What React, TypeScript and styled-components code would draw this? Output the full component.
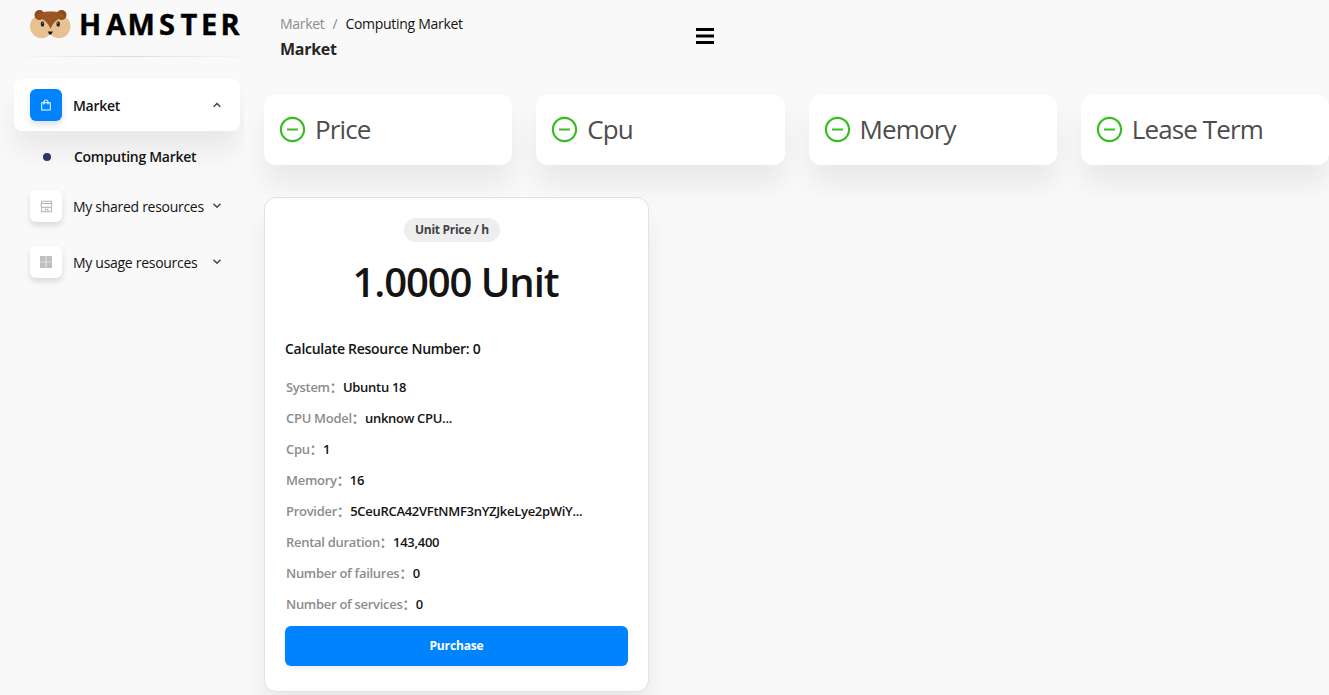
import React from "react";
import styled, { createGlobalStyle } from "styled-components";
import { AiOutlineShopping, AiOutlineShop, AiOutlineMinusCircle } from "react-icons/ai";

const GlobalStyle = createGlobalStyle`
  * { box-sizing: border-box; }
  html, body { margin: 0; overflow: hidden; }
  body {
    background: #f9f9f9;
    font-family: "Open Sans", "Noto Sans CJK SC", sans-serif;
    font-size: 14px;
    letter-spacing: -0.29px;
    color: #141414;
  }
`;

const Layout = styled.div`
  display: flex;
  height: 695px;
  overflow: hidden;
`;

const Sidebar = styled.aside`
  width: 244px;
  flex: none;
  padding: 8px 4px 0 14px;
  overflow: hidden;
`;

const Brand = styled.div`
  display: flex;
  height: 32px;
  padding-left: 15px;

  svg { overflow: visible; }
`;

const Rule = styled.hr`
  height: 1px;
  margin: 16px 0 22px;
  border: 0;
  background: linear-gradient(90deg, rgba(224, 225, 226, 0), #dcdcdc, rgba(224, 225, 226, 0.15));
`;

const MenuItem = styled.div<{ $active?: boolean }>`
  display: flex;
  align-items: center;
  height: ${(p) => (p.$active ? 52 : 56)}px;
  padding: 0 19px 0 16px;
  border-radius: 8px;
  font-weight: ${(p) => (p.$active ? 600 : 400)};
  background: ${(p) => (p.$active ? "#fff" : "transparent")};
  box-shadow: ${(p) => (p.$active ? "0 20px 27px rgba(0, 0, 0, 0.065)" : "none")};
  color: #141414;
`;

const IconTile = styled.span<{ $active?: boolean }>`
  display: flex;
  align-items: center;
  justify-content: center;
  width: 32px;
  height: 32px;
  margin-right: 11px;
  border-radius: 6px;
  color: ${(p) => (p.$active ? "#fff" : "#b5b5b5")};
  background: ${(p) => (p.$active ? "#0083ff" : "#fff")};
  box-shadow: 0 4px 6px rgba(0, 0, 0, 0.12);
`;

const MenuLabel = styled.span`
  flex: 1;
  line-height: 22px;
  padding-top: 2px;
  white-space: nowrap;
`;

const SubItem = styled.div`
  display: flex;
  align-items: center;
  height: 47px;
  padding: 4px 0 0 29px;
  font-weight: 600;
`;

const Dot = styled.span`
  width: 8px;
  height: 8px;
  margin-right: 23px;
  border-radius: 50%;
  background: #2f365f;
`;

const Main = styled.main`
  flex: 1;
  min-width: 0;
  padding: 13px 0 0 20px;
`;

const Header = styled.header`
  display: flex;
  height: 82px;
  padding-left: 16px;
`;

const Titles = styled.div`
  width: 414px;
`;

const Crumbs = styled.div`
  display: flex;
  gap: 8px;
  line-height: 22px;
  color: #8c8c8c;
`;

const CrumbCurrent = styled.span`
  color: #141414;
`;

const Title = styled.h1`
  margin: 2px 0 0;
  font-size: 16px;
  line-height: 24px;
  font-weight: 700;
  color: #262626;
`;

const MenuButton = styled.button`
  display: flex;
  align-items: center;
  width: 24px;
  height: 24px;
  margin-top: 11px;
  padding: 0 2px;
  border: 0;
  background: none;
`;

const Filters = styled.div`
  display: grid;
  grid-template-columns: repeat(4, 1fr);
  gap: 24px;
`;

const FilterCard = styled.div`
  display: flex;
  align-items: center;
  gap: 8px;
  height: 70px;
  padding: 0 0 2px 14px;
  border-radius: 12px;
  background: #fff;
  box-shadow: 0 20px 27px rgba(0, 0, 0, 0.065);
  font-size: 26px;
  letter-spacing: -0.88px;
  color: #4d4d4d;

  svg { color: #37bd22; }
`;

const OfferCard = styled.section`
  display: flex;
  flex-direction: column;
  width: 385px;
  height: 495px;
  margin-top: 32px;
  padding: 20px;
  border: 1px solid #e2e2e2;
  border-radius: 12px;
  background: #fff;
  box-shadow: 0 20px 27px rgba(0, 0, 0, 0.065);
`;

const Tag = styled.span`
  align-self: center;
  height: 24px;
  margin-right: 9px;
  padding: 0 11px;
  border-radius: 12px;
  background: #eee;
  font-size: 12px;
  line-height: 24px;
  font-weight: 700;
  color: #434343;
`;

const Price = styled.div`
  height: 75px;
  margin-top: 10px;
  padding-right: 2px;
  text-align: center;
  font-size: 40px;
  line-height: 60px;
  font-weight: 600;
  letter-spacing: -1.08px;
`;

const ResourceNumber = styled.div`
  height: 45px;
  line-height: 44px;
  font-weight: 600;
`;

const Row = styled.div`
  height: 31px;
  padding-left: 1px;
  font-size: 13px;
  line-height: 31px;
  font-weight: 600;
  white-space: nowrap;
`;

const RowLabel = styled.span`
  margin-right: 0.5px;
  color: #8c8c8c;
`;

const Purchase = styled.button`
  height: 40px;
  margin-top: 6px;
  padding-bottom: 2px;
  border: 0;
  border-radius: 6px;
  background: #0083ff;
  box-shadow: 0 2px 4px rgba(0, 0, 0, 0.07);
  color: #fff;
  font: 700 12px "Open Sans", sans-serif;
  letter-spacing: -0.15px;
`;

const Logo = () => (
  <svg width="212" height="32" viewBox="0 0 212 32">
    <circle cx="12.500" cy="18.500" r="11.500" fill="#e8c193" />
    <circle cx="30" cy="18.500" r="11.500" fill="#e8c193" />
    <path d="M16 12H27V26H16Z" fill="#e8c193" />
    <circle cx="10.500" cy="7" r="5" fill="#8b4a1c" />
    <circle cx="32.500" cy="7" r="5" fill="#8b4a1c" />
    <path d="M6 10C9 4.500 14 3.500 21.500 3.500C29 3.500 34 4.500 37 10C30 9 25 13 21.500 21C18 13 13 9 6 10Z" fill="#9c5523" />
    <ellipse cx="13.500" cy="16" rx="1.800" ry="2.800" fill="#242321" />
    <ellipse cx="29.200" cy="16" rx="1.800" ry="2.800" fill="#242321" />
    <circle cx="13.900" cy="15" r=".6" fill="#ddd" />
    <circle cx="28.800" cy="15" r=".6" fill="#ddd" />
    <path d="M18.800 23.500H23.800L22.300 26.500H20.300Z" fill="#171512" />
    <text
      x="50 77 98.500 130 151.500 172 191.500"
      y="26.800"
      fontFamily="Open Sans"
      fontWeight="700"
      fontSize="29"
      fill="#000"
      stroke="#000"
      strokeWidth=".4"
    >
      HAMSTER
    </text>
  </svg>
);

const Chevron = ({ up }: { up?: boolean }) => (
  <svg width="8" height="6" viewBox="0 0 8 6" fill="none" stroke="#434343" strokeWidth="1.5">
    <path d={up ? "M.7 4.800L4 1.500L7.300 4.800" : "M.5 .8L4 4.300L7.500 .8"} />
  </svg>
);

const Grid = () => (
  <svg width="12" height="12" viewBox="0 0 12 12" fill="#bfbfbf">
    <path d="M0 0H5.700V5.700H0ZM6.300 0H12V5.700H6.300ZM0 6.300H5.700V12H0ZM6.300 6.300H12V12H6.300Z" />
  </svg>
);

const details = [
  ["System", "Ubuntu 18"],
  ["CPU Model", "unknow CPU..."],
  ["Cpu", "1"],
  ["Memory", "16"],
  ["Provider", "5CeuRCA42VFtNMF3nYZJkeLye2pWiY..."],
  ["Rental duration", "143,400"],
  ["Number of failures", "0"],
  ["Number of services", "0"],
];

export default function App() {
  return (
    <Layout>
      <GlobalStyle />
      <Sidebar>
        <Brand><Logo /></Brand>
        <Rule />
        <MenuItem $active>
          <IconTile $active><AiOutlineShopping size={14} /></IconTile>
          <MenuLabel>Market</MenuLabel>
          <Chevron up />
        </MenuItem>
        <SubItem><Dot />Computing Market</SubItem>
        <MenuItem>
          <IconTile><AiOutlineShop size={15} /></IconTile>
          <MenuLabel>My shared resources</MenuLabel>
          <Chevron />
        </MenuItem>
        <MenuItem>
          <IconTile><Grid /></IconTile>
          <MenuLabel>My usage resources</MenuLabel>
          <Chevron />
        </MenuItem>
      </Sidebar>
      <Main>
        <Header>
          <Titles>
            <Crumbs>
              <span>Market</span>
              <span>/</span>
              <CrumbCurrent>Computing Market</CrumbCurrent>
            </Crumbs>
            <Title>Market</Title>
          </Titles>
          <MenuButton aria-label="Toggle menu">
            <svg width="18" height="16" viewBox="0 0 18 16">
              <path d="M0 0H18V3H0ZM0 6.500H18V9.500H0ZM0 13H18V16H0Z" />
            </svg>
          </MenuButton>
        </Header>
        <Filters>
          {["Price", "Cpu", "Memory", "Lease Term"].map((name) => (
            <FilterCard key={name}>
              <AiOutlineMinusCircle size={29} />
              {name}
            </FilterCard>
          ))}
        </Filters>
        <OfferCard>
          <Tag>Unit Price / h</Tag>
          <Price>1.0000 Unit</Price>
          <ResourceNumber>Calculate Resource Number: 0</ResourceNumber>
          {details.map(([label, value]) => (
            <Row key={label}>
              <RowLabel>{label}：</RowLabel>
              {value}
            </Row>
          ))}
          <Purchase>Purchase</Purchase>
        </OfferCard>
      </Main>
    </Layout>
  );
}
